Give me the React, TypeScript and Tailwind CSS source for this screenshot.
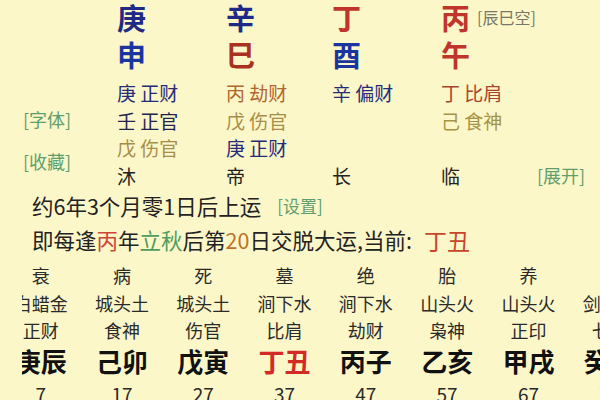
import React from "react";

const font = { fontFamily: '"Noto Sans CJK SC", "Noto Sans", sans-serif' };

const cols = [
  { sz: "衰", ny: "白蜡金", ss: "正财", gz: "庚辰", n: "7", red: false },
  { sz: "病", ny: "城头土", ss: "食神", gz: "己卯", n: "17", red: false },
  { sz: "死", ny: "城头土", ss: "伤官", gz: "戊寅", n: "27", red: false },
  { sz: "墓", ny: "涧下水", ss: "比肩", gz: "丁丑", n: "37", red: true },
  { sz: "绝", ny: "涧下水", ss: "劫财", gz: "丙子", n: "47", red: false },
  { sz: "胎", ny: "山头火", ss: "枭神", gz: "乙亥", n: "57", red: false },
  { sz: "养", ny: "山头火", ss: "正印", gz: "甲戌", n: "67", red: false },
  { sz: "长", ny: "剑锋金", ss: "七杀", gz: "癸酉", n: "77", red: false },
];

const gridCols = "grid grid-cols-[109px_106px_109px_1fr]";

export default function App() {
  return (
    <div
      className="w-[600px] h-[400px] overflow-hidden bg-[#fcf7c9] text-[#222]"
      style={font}
    >
      {/* top section */}
      <div className="flex">
        <div className="w-[117px] flex flex-col pl-[23px]">
          <div className="mt-[106px] h-[26px] leading-[26px] text-[18px] text-[#5f9f6e]">
            [字体]
          </div>
          <div className="mt-[16px] h-[26px] leading-[26px] text-[18px] text-[#5f9f6e]">
            [收藏]
          </div>
        </div>
        <div className="flex-1 flex flex-col">
          <div className={`${gridCols} h-[35px] items-center text-[29px] font-bold leading-[35px]`}>
            <div className="text-[#1f2a86]">庚</div>
            <div className="text-[#1f2a86]">辛</div>
            <div className="text-[#c0352b]">丁</div>
            <div className="flex items-center">
              <span className="text-[#c0352b]">丙</span>
              <span className="ml-[7px] text-[16px] font-normal text-[#77776a]">[辰巳空]</span>
            </div>
          </div>
          <div className={`${gridCols} h-[39px] items-center text-[29px] font-bold leading-[39px]`}>
            <div className="text-[#1b35a0]">申</div>
            <div className="text-[#a8321f]">巳</div>
            <div className="text-[#1b35a0]">酉</div>
            <div className="text-[#c0352b]">午</div>
          </div>
          <div className="mt-[5px] flex flex-col text-[19px] leading-[27.5px]">
            <div className={gridCols}>
              <div className="text-[#262b78]">庚 正财</div>
              <div className="text-[#b0662e]">丙 劫财</div>
              <div className="text-[#262b78]">辛 偏财</div>
              <div className="text-[#a8452e]">丁 比肩</div>
            </div>
            <div className={gridCols}>
              <div className="text-[#23234e]">壬 正官</div>
              <div className="text-[#a68e4a]">戊 伤官</div>
              <div></div>
              <div className="text-[#a69446]">己 食神</div>
            </div>
            <div className={gridCols}>
              <div className="text-[#a68e4a]">戊 伤官</div>
              <div className="text-[#262b78]">庚 正财</div>
              <div></div>
              <div></div>
            </div>
            <div className={gridCols}>
              <div className="text-[#222]">沐</div>
              <div className="text-[#222]">帝</div>
              <div className="text-[#222]">长</div>
              <div className="flex">
                <span className="text-[#222]">临</span>
                <span className="ml-[77px] text-[18px] text-[#5f9f6e]">[展开]</span>
              </div>
            </div>
          </div>
        </div>
      </div>

      {/* luck info */}
      <div className="pl-[32px] flex flex-col">
        <div className="h-[34px] flex items-center text-[21.5px] text-[#222]">
          <span>约6年3个月零1日后上运</span>
          <span className="ml-[16px] text-[17px] text-[#5f9f6e]">[设置]</span>
        </div>
        <div className="h-[34px] flex items-center text-[21.5px] text-[#222]">
          <span>即每逢</span>
          <span className="text-[#d0453a]">丙</span>
          <span>年</span>
          <span className="text-[#4f9c5e]">立秋</span>
          <span>后第</span>
          <span className="text-[#c0702a]">20</span>
          <span>日交脱大运,当前:</span>
          <span className="ml-[12px] text-[23px] text-[#c8452a]">丁丑</span>
        </div>
      </div>

      {/* dayun list */}
      <div className="mt-[4px] ml-[22px] overflow-hidden">
        <div className="flex -ml-[22px] w-max">
          {cols.map((c, i) => (
            <div key={i} className="w-[81.3px] shrink-0 flex flex-col items-center text-[#2a2a2a]">
              <div className="h-[28px] leading-[28px] text-[18px]">{c.sz}</div>
              <div className="h-[28px] leading-[28px] text-[18px] whitespace-nowrap">{c.ny}</div>
              <div className="h-[26px] leading-[26px] text-[18px]">{c.ss}</div>
              <div
                className={`h-[36px] leading-[36px] text-[26px] font-bold whitespace-nowrap ${
                  c.red ? "text-[#d42a26]" : "text-[#111]"
                }`}
              >
                {c.gz}
              </div>
              <div className="h-[30px] leading-[30px] text-[19px]">{c.n}</div>
            </div>
          ))}
        </div>
      </div>
    </div>
  );
}
